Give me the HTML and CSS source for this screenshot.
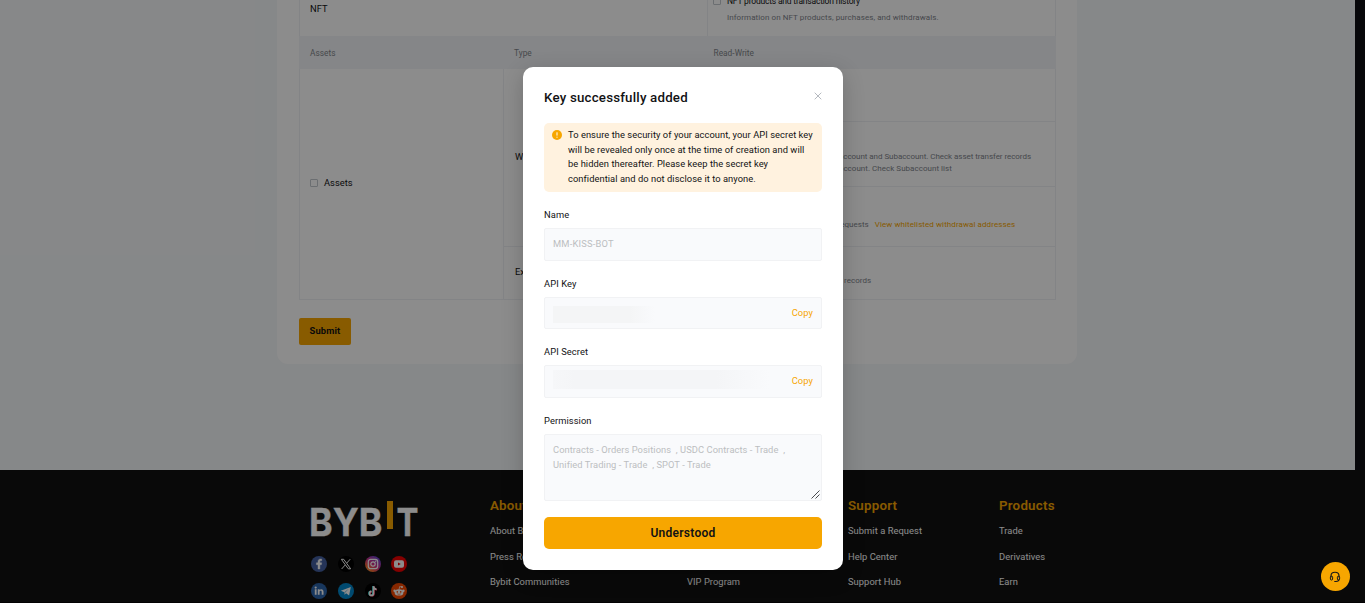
FILE: index.html
```html
<!DOCTYPE html>
<html lang="en">
<head>
<meta charset="utf-8">
<title>API Management</title>
<link rel="stylesheet" href="styles.css">
</head>
<body>
<div class="page">
  <main class="main">
    <section class="card">
      <div class="table">
        <div class="nft-row">
          <div class="nft-name">NFT</div>
          <div class="nft-info">
            <div class="option"><i class="check"></i><span class="option-title">NFT products and transaction history</span></div>
            <p class="hint nft-hint">Information on NFT products, purchases, and withdrawals.</p>
          </div>
        </div>
        <div class="table-head"><span>Assets</span><span>Type</span><span>Read-Write</span></div>
        <div class="table-body">
          <div class="cell cell-assets"><i class="check"></i><span>Assets</span></div>
          <div class="cell cell-wallet">Wallet</div>
          <div class="cell cell-exchange">Exchange</div>
          <div class="cell cell-r1"></div>
          <div class="cell cell-r2 hint"><span>account and Subaccount. Check asset transfer records</span><span class="second">account. Check Subaccount list</span></div>
          <div class="cell cell-r3 hint"><span>requests</span><a class="whitelist">View whitelisted withdrawal addresses</a></div>
          <div class="cell cell-r4 hint"><span>records</span></div>
        </div>
      </div>
      <button class="submit">Submit</button>
    </section>
  </main>
  <footer class="footer">
    <div class="brand">
      <svg class="logo" width="110" height="38" viewBox="0 0 110 38">
        <g font-family="Inter, sans-serif" font-weight="700" font-size="38" fill="#fff" stroke="#fff" stroke-width=".3">
          <text x="-.9" y="36.4" textLength="73.4" lengthAdjust="spacingAndGlyphs">BYB</text>
          <text x="86.6" y="36.4" textLength="22" lengthAdjust="spacingAndGlyphs">T</text>
        </g>
        <rect x="77" y="1" width="6" height="28" fill="#f7a600"/>
      </svg>
      <div class="social">
        <svg viewBox="0 0 16 16"><circle cx="8" cy="8" r="8" fill="#4460a0"/><path d="M7 13V8.7H5.4V6.8H7V5.6C7 3.9 8 3 9.5 3h1.2v1.8h-.9c-.7 0-.9.3-.9.9v1.1h1.8l-.3 1.9H8.9V13z" fill="#fff" stroke="#fff" stroke-width=".4"/></svg>
        <svg viewBox="0 0 16 16"><circle cx="8" cy="8" r="8" fill="#000"/><path d="M3.3 3.3h2.4l7 9.5h-2.4zM12.2 3.2L8.8 7M7.2 9l-3.6 4" fill="none" stroke="#fff" stroke-width="1"/></svg>
        <svg viewBox="0 0 16 16"><defs><linearGradient id="ig" x1="0" y1="1" x2=".8" y2="0"><stop offset="0" stop-color="#ffc050"/><stop offset=".25" stop-color="#f87030"/><stop offset=".55" stop-color="#d02f88"/><stop offset="1" stop-color="#5a48d8"/></linearGradient></defs><circle cx="8" cy="8" r="8" fill="url(#ig)"/><g fill="none" stroke="#fff" stroke-width="1.2"><rect x="3.3" y="3.3" width="9.4" height="9.4" rx="2.4"/><circle cx="8" cy="8" r="2.2"/></g><circle cx="10.7" cy="5.3" r=".7" fill="#fff"/></svg>
        <svg viewBox="0 0 16 16"><circle cx="8" cy="8" r="8" fill="#f00000"/><rect x="3" y="4.3" width="10" height="7.4" rx="2" fill="#fff"/><path d="M7 6.4v3.2L9.8 8z" fill="#f00000"/></svg>
        <svg viewBox="0 0 16 16"><circle cx="8" cy="8" r="8" fill="#2d64aa"/><circle cx="4.7" cy="4.6" r="1.1" fill="#fff"/><path d="M3.8 6.3h1.8v5.4H3.8zM6.8 6.3h1.7v.8c.4-.6 1-.9 1.8-.9 1.5 0 2.2 1 2.2 2.5v3h-1.8V9c0-.8-.3-1.2-1-1.2s-1.1.5-1.1 1.2v2.7H6.8z" fill="#fff"/></svg>
        <svg viewBox="0 0 16 16"><circle cx="8" cy="8" r="8" fill="#0088cc"/><path d="M2.8 7.8L12.8 4l-1.7 8.5-3-2.2-1.5 1.5-.3-2.6z" fill="#fff"/><path d="M6.3 9.2L11 5.6 7.2 9.7l-.6 2.1z" fill="#70badd"/></svg>
        <svg viewBox="0 0 16 16"><circle cx="8" cy="8" r="8" fill="#000"/><g fill="none" stroke-width="1.6"><path d="M8 3v7.2a2 2 0 1 1-2-2M8 3c.2 2 1.3 3 3 3.2" stroke="#2af0ea"/><path d="M9 3.6v7.2a2 2 0 1 1-2-2M9 3.6c.2 2 1.3 3 3 3.2" stroke="#fe2c55"/><path d="M8.5 3.2v7.2a2 2 0 1 1-2-2M8.5 3.2c.2 2 1.3 3 3 3.2" stroke="#fff"/></g></svg>
        <svg viewBox="0 0 16 16"><circle cx="8" cy="8" r="8" fill="#f54800"/><g fill="#fff"><ellipse cx="8" cy="9.4" rx="4.4" ry="3.2"/><circle cx="3.6" cy="7.7" r="1.2"/><circle cx="12.4" cy="7.7" r="1.2"/><circle cx="11" cy="3.9" r="1"/></g><path d="M8 6.5l.7-3 2.3.5" fill="none" stroke="#fff" stroke-width=".7"/><circle cx="6.3" cy="8.9" r=".8" fill="#f54800"/><circle cx="9.7" cy="8.9" r=".8" fill="#f54800"/><path d="M6.2 10.8q1.8 1.1 3.6 0" fill="none" stroke="#f54800" stroke-width=".6"/></svg>
      </div>
    </div>
    <div class="links links-about"><h4>About</h4><a>About Bybit</a><a>Press Room</a><a>Bybit Communities</a></div>
    <div class="links links-services"><a>VIP Program</a></div>
    <div class="links links-support"><h4>Support</h4><a>Submit a Request</a><a>Help Center</a><a>Support Hub</a></div>
    <div class="links links-products"><h4>Products</h4><a>Trade</a><a>Derivatives</a><a>Earn</a></div>
  </footer>
</div>
<div class="overlay"></div>
<div class="modal">
  <header class="modal-head">
    <h2>Key successfully added</h2>
    <svg class="close" viewBox="0 0 8 8"><path d="M.7 .7l6.6 6.6M7.3 .7L.7 7.3" stroke="#adb1b8" stroke-width=".9"/></svg>
  </header>
  <div class="alert">
    <svg class="alert-icon" viewBox="0 0 10 10"><circle cx="5" cy="5" r="5" fill="#f7a600"/><path d="M5 2.3v3.3M5 6.7v1" stroke="#fff" stroke-width="1"/></svg>
    <p>To ensure the security of your account, your API secret key<br>will be revealed only once at the time of creation and will<br>be hidden thereafter. Please keep the secret key<br>confidential and do not disclose it to anyone.</p>
  </div>
  <div class="label">Name</div>
  <div class="field field-name">MM-KISS-BOT</div>
  <div class="label">API Key</div>
  <div class="field field-key"><span class="redacted-key"></span><a class="copy">Copy</a></div>
  <div class="label">API Secret</div>
  <div class="field field-secret"><span class="redacted-secret"></span><a class="copy">Copy</a></div>
  <div class="label">Permission</div>
  <div class="field area">
    <span>Contracts - Orders Positions&nbsp; , USDC Contracts - Trade&nbsp; ,</span>
    <span>Unified Trading - Trade&nbsp; , SPOT - Trade</span>
    <svg class="grip" viewBox="0 0 9 9"><path d="M.5 8.5l8-8M4.5 8.5l4-4" stroke="#33353a" stroke-width=".9"/></svg>
  </div>
  <button class="confirm">Understood</button>
</div>
<div class="support-fab">
  <svg viewBox="0 0 12 12"><path d="M2 6.5V4.8C2 2.4 3.6 1.3 6 1.3s4 1.1 4 3.5v1.7M10 8.6c0 1.3-1 1.9-3 1.9H5.3" fill="none" stroke="#16171a" stroke-width="1.1"/><rect x="1.4" y="5.2" width="2.2" height="3.8" rx="1" fill="none" stroke="#16171a"/><rect x="8.4" y="5.2" width="2.2" height="3.8" rx="1" fill="none" stroke="#16171a"/></svg>
</div>
</body>
</html>
```

FILE: styles.css
```css
* { box-sizing: border-box; }
body {
  margin: 0;
  width: 1365px;
  height: 603px;
  overflow: hidden;
  position: relative;
  background: #0e0e13;
  font: 9.33px/12px Roboto, "Liberation Sans", sans-serif;
  letter-spacing: .03px;
  color: #121214;
}
h2, h4, p { margin: 0; }
button { border: 0; font-family: inherit; color: #121214; padding: 0; }

.page { display: flex; flex-direction: column; height: 603px; }
.main { width: 1355px; height: 470px; background: #f5f7fa; padding-left: 277px; }
.card { width: 800px; height: 364px; background: #fff; border-radius: 0 0 11px 11px; padding: 0 22px; }
.table { width: 757px; }
.nft-row { display: grid; grid-template-columns: 407px 1fr; height: 36px; border: solid #eff1f4; border-width: 0 1px; }
.nft-name { padding: 3px 10px; letter-spacing: .1px; }
.nft-info { border-left: 1px solid #eff1f4; padding-left: 5px; }
.option { display: flex; align-items: center; gap: 6px; height: 12px; margin-top: -5px; }
.option-title { font-size: 8.5px; letter-spacing: -.2px; }
.check { width: 8px; height: 8px; border: 1px solid #c4c8ce; border-radius: 1px; flex: none; }
.hint { font-size: 8px; line-height: 12px; color: #81858c; }
.nft-hint { margin: 5px 0 0 14px; letter-spacing: .08px; }

.table-head {
  display: grid;
  grid-template-columns: 204px 199.5px 1fr;
  align-items: center;
  height: 33px;
  padding-left: 11px;
  background: #f3f5f7;
  color: #81858c;
  font-size: 8.3px;
}
.table-body {
  display: grid;
  grid-template-columns: 204px 199px 353px;
  grid-template-rows: 52px 65px 60px 53px;
  border: solid #eff1f4;
  border-width: 0 1px 1px 0;
}
.cell { border: solid #eff1f4; border-width: 0 0 0 1px; display: flex; align-items: center; padding-left: 11px; padding-bottom: 2px; }
.cell-assets { grid-area: 1 / 1 / 5 / 2; gap: 6px; padding-left: 10px; }
.cell-wallet { grid-area: 1 / 2 / 4 / 3; }
.cell-exchange { grid-area: 4 / 2 / 5 / 3; border-top-width: 1px; }
.cell-r1 { grid-area: 1 / 3 / 2 / 4; }
.cell-r2 { grid-area: 2 / 3 / 3 / 4; flex-direction: column; align-items: flex-start; padding: 29px 0 0 136px; border-top-width: 1px; letter-spacing: -.05px; }
.second { letter-spacing: .03px; }
.cell-r3 { grid-area: 3 / 3 / 4 / 4; gap: 6px; padding: 16px 0 0 134.5px; border-top-width: 1px; letter-spacing: .04px; }
.cell-r4 { grid-area: 4 / 3 / 5 / 4; padding: 15px 0 0 141px; border-top-width: 1px; }
.whitelist { color: #f7a600; letter-spacing: .08px; }
.submit { display: block; margin-top: 18px; width: 52px; height: 27px; border-radius: 2px; background: #f7a600; font-size: 9.33px; font-weight: 700; letter-spacing: .15px; padding-bottom: 2px; }

.footer { flex: 1; display: flex; background: #121212; border-bottom: 1px solid #050304; padding: 28px 0 0 310px; }
.brand { width: 180px; padding-top: 2px; }
.logo { display: block; }
.social { display: grid; grid-template-columns: repeat(4, 16px); gap: 11px 10.8px; margin: 18px 0 0 1px; }
.social svg { width: 16px; height: 16px; }
.links { display: flex; flex-direction: column; color: #fff; letter-spacing: .06px; }
.links h4 { font-size: 13.3px; line-height: 16px; font-weight: 600; color: #f7a600; margin-bottom: 11px; letter-spacing: .24px; }
.links a { line-height: 12px; margin-bottom: 13.6px; }
.links-about { width: 197px; }
.links-services { width: 161px; padding-top: 78.2px; }
.links-support { width: 151px; }

.overlay { position: absolute; inset: 0; background: rgba(0, 0, 0, .45); }

.modal {
  position: absolute;
  left: 523px;
  top: 67px;
  width: 320px;
  height: 503px;
  padding: 20px 21px 21px;
  background: #fff;
  border-radius: 10px;
  box-shadow: 0 6px 22px rgba(0, 0, 0, .2);
  display: flex;
  flex-direction: column;
}
.modal-head { display: flex; justify-content: space-between; height: 36px; }
.modal-head h2 { font-size: 13.3px; line-height: 22px; font-weight: 500; letter-spacing: .2px; }
.close { width: 8px; height: 8px; margin-top: 5px; }
.alert { display: flex; gap: 6px; height: 69px; flex: none; padding: 5px 8px; border-radius: 5px; background: #fff2df; line-height: 14.65px; white-space: nowrap; letter-spacing: .055px; }
.alert-icon { width: 10px; height: 10px; margin-top: 2px; flex: none; }
.label { height: 12px; margin: 17px 0 7px; flex: none; letter-spacing: .08px; }
.field { display: flex; align-items: center; justify-content: space-between; flex: none; padding: 0 8px; background: #f9fafc; border: 1px solid #f1f2f4; border-radius: 2px; color: #bcbec1; }
.field-name { height: 33px; letter-spacing: .2px; padding-bottom: 1px; }
.field-key { height: 32px; }
.field-secret { height: 33px; padding-bottom: 1px; }
.redacted-key { width: 102px; height: 17px; background: linear-gradient(90deg, #f4f5f6 75%, #f9fafc); margin-top: 2px; }
.redacted-secret { width: 217px; height: 19px; background: linear-gradient(90deg, #f6f7f9, #f4f5f7 10%, #f4f5f7 75%, #f9fafc); margin-top: -3px; }
.copy { color: #f7a600; letter-spacing: .08px; }
.area { position: relative; height: 67px; flex-direction: column; align-items: flex-start; justify-content: flex-start; padding-top: 7px; line-height: 15px; white-space: nowrap; letter-spacing: .06px; }
.grip { position: absolute; right: 1px; bottom: 1px; width: 9px; height: 9px; }
.confirm { margin-top: 16px; height: 32px; flex: none; border-radius: 5px; background: #f7a600; font-size: 12px; font-weight: 600; letter-spacing: .27px; }

.support-fab { position: absolute; left: 1321px; top: 562px; width: 29px; height: 29px; border-radius: 50%; background: #f7a600; display: flex; align-items: center; justify-content: center; }
.support-fab svg { width: 12px; height: 12px; margin-right: 1px; }
```
